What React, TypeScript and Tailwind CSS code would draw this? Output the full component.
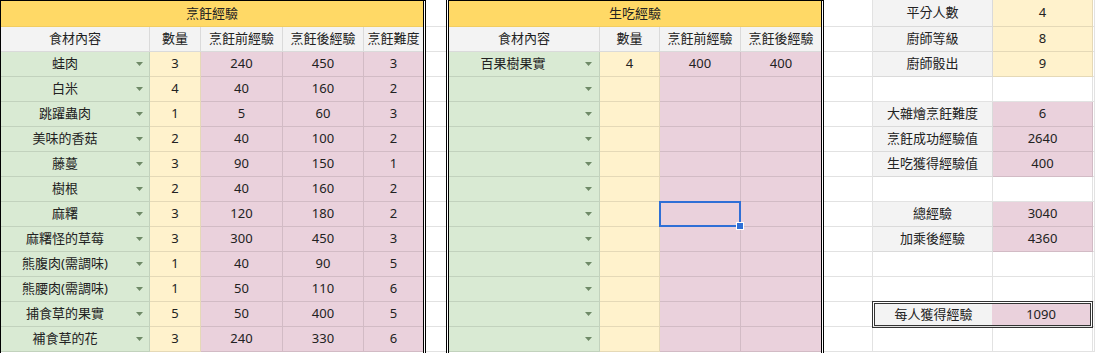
import React from 'react'

const cook = [
  ['蛙肉', '3', '240', '450', '3'],
  ['白米', '4', '40', '160', '2'],
  ['跳躍蟲肉', '1', '5', '60', '3'],
  ['美味的香菇', '2', '40', '100', '2'],
  ['藤蔓', '3', '90', '150', '1'],
  ['樹根', '2', '40', '160', '2'],
  ['麻糬', '3', '120', '180', '2'],
  ['麻糬怪的草莓', '3', '300', '450', '3'],
  ['熊腹肉(需調味)', '1', '40', '90', '5'],
  ['熊腰肉(需調味)', '1', '50', '110', '6'],
  ['捕食草的果實', '5', '50', '400', '5'],
  ['補食草的花', '3', '240', '330', '6'],
]

const raw = [['百果樹果實', '4', '400', '400'], ...Array.from({ length: 11 }, () => ['', '', '', ''])]

// right panel: [label, value, tone]
const side: [string, string, string][] = [
  ['平分人數', '4', 'y'],
  ['廚師等級', '8', 'y'],
  ['廚師骰出', '9', 'y'],
  ['', '', ''],
  ['大雜燴烹飪難度', '6', 'p'],
  ['烹飪成功經驗值', '2640', 'p'],
  ['生吃獲得經驗值', '400', 'p'],
  ['', '', ''],
  ['總經驗', '3040', 'p'],
  ['加乘後經驗', '4360', 'p'],
  ['', '', ''],
  ['', '', ''],
  ['每人獲得經驗', '1090', 'box'],
  ['', '', ''],
]

function Arrow() {
  return (
    <svg width="7" height="4" viewBox="0 0 7 4" className="block">
      <polygon points="0,0 7,0 3.5,4" fill="#6f8a67" />
    </svg>
  )
}

const cell = 'flex items-center justify-center border-b border-r border-black/10'

export default function App() {
  return (
    <div className="flex h-[353px] w-[1095px] overflow-hidden bg-white text-[13px] text-[#222] font-['Noto_Sans','Noto_Sans_CJK_TC',sans-serif]">
      {/* 烹飪經驗 */}
      <div className="w-[426px] shrink-0 border-black border-double border-l border-t border-r-[3px]">
        <div className="h-[26px] bg-[#ffd966] flex items-center justify-center border-b border-black/5">烹飪經驗</div>
        <div className="grid grid-cols-[149px_51px_82px_81px_59px] h-[25px] bg-[#f3f3f3]">
          <div className={cell}>食材內容</div>
          <div className={cell}>數量</div>
          <div className={cell}>烹飪前經驗</div>
          <div className={cell}>烹飪後經驗</div>
          <div className={`${cell} border-r-0`}>烹飪難度</div>
        </div>
        {cook.map((r, i) => (
          <div key={i} className="grid grid-cols-[149px_51px_82px_81px_59px] h-[25px]">
            <div className={`${cell} bg-[#d9ead3] justify-start`}>
              <span className="flex-1 text-center">{r[0]}</span>
              <span className="w-[20px] flex justify-center"><Arrow /></span>
            </div>
            <div className={`${cell} bg-[#fff2cc]`}>{r[1]}</div>
            <div className={`${cell} bg-[#ead1dc]`}>{r[2]}</div>
            <div className={`${cell} bg-[#ead1dc]`}>{r[3]}</div>
            <div className={`${cell} bg-[#ead1dc] border-r-0`}>{r[4]}</div>
          </div>
        ))}
      </div>

      {/* spacer column */}
      <div className="w-[20px] shrink-0">
        <div className="h-[27px] border-b border-[#e2e2e2]" />
        {Array.from({ length: 13 }, (_, i) => (
          <div key={i} className="h-[25px] border-b border-[#e2e2e2]" />
        ))}
      </div>

      {/* 生吃經驗 */}
      <div className="w-[378px] shrink-0 border-black border-double border-t border-l-[3px] border-r-[3px]">
        <div className="h-[26px] bg-[#ffd966] flex items-center justify-center border-b border-black/5">生吃經驗</div>
        <div className="grid grid-cols-[151px_60px_81px_80px] h-[25px] bg-[#f3f3f3]">
          <div className={cell}>食材內容</div>
          <div className={cell}>數量</div>
          <div className={cell}>烹飪前經驗</div>
          <div className={`${cell} border-r-0`}>烹飪後經驗</div>
        </div>
        {raw.map((r, i) => (
          <div key={i} className="grid grid-cols-[151px_60px_81px_80px] h-[25px] relative">
            <div className={`${cell} bg-[#d9ead3] justify-start`}>
              <span className="flex-1 text-center">{r[0]}</span>
              <span className="w-[22px] flex justify-center"><Arrow /></span>
            </div>
            <div className={`${cell} bg-[#fff2cc]`}>{r[1]}</div>
            <div className={`${cell} bg-[#ead1dc] relative`}>
              {r[2]}
              {i === 6 && (
                <>
                  <div className="absolute z-10 -left-px -top-px w-[82px] h-[26px] border-2 border-[#2f6fd6]" />
                  <div className="absolute z-10 left-[76px] top-[20px] w-[8px] h-[8px] bg-[#2f6fd6] border border-white" />
                </>
              )}
            </div>
            <div className={`${cell} bg-[#ead1dc] border-r-0`}>{r[3]}</div>
          </div>
        ))}
      </div>

      {/* summary */}
      <div className="flex-1 grid grid-cols-[49px_120px_100px_1fr] auto-rows-[25px] grid-rows-[27px]">
        {side.map(([label, value, tone], i) => {
          const h = i === 0 ? 'h-[27px]' : 'h-[25px]'
          const base = `${h} flex items-center justify-center border-b border-r border-[#e2e2e2]`
          if (tone === 'box') {
            return (
              <React.Fragment key={i}>
                <div className={base} />
                <div className="col-span-2 h-[25px] border-b border-r border-[#e2e2e2] relative">
                  <div className="absolute -left-px -top-px w-[221px] h-[27px] flex border-[3px] border-double border-[#333]">
                    <div className="w-[117px] bg-[#f3f3f3] flex items-center justify-center">{label}</div>
                    <div className="flex-1 bg-[#ead1dc] flex items-center justify-center">{value}</div>
                  </div>
                </div>
                <div className={base} />
              </React.Fragment>
            )
          }
          const val = tone === 'y' ? 'bg-[#fff2cc] border-black/10' : tone === 'p' ? 'bg-[#ead1dc] border-black/10' : ''
          return (
            <React.Fragment key={i}>
              <div className={base} />
              <div className={`${base} ${label ? 'bg-[#f3f3f3] border-black/10' : ''}`}>{label}</div>
              <div className={`${base} ${val}`}>{value}</div>
              <div className={base} />
            </React.Fragment>
          )
        })}
      </div>
    </div>
  )
}
